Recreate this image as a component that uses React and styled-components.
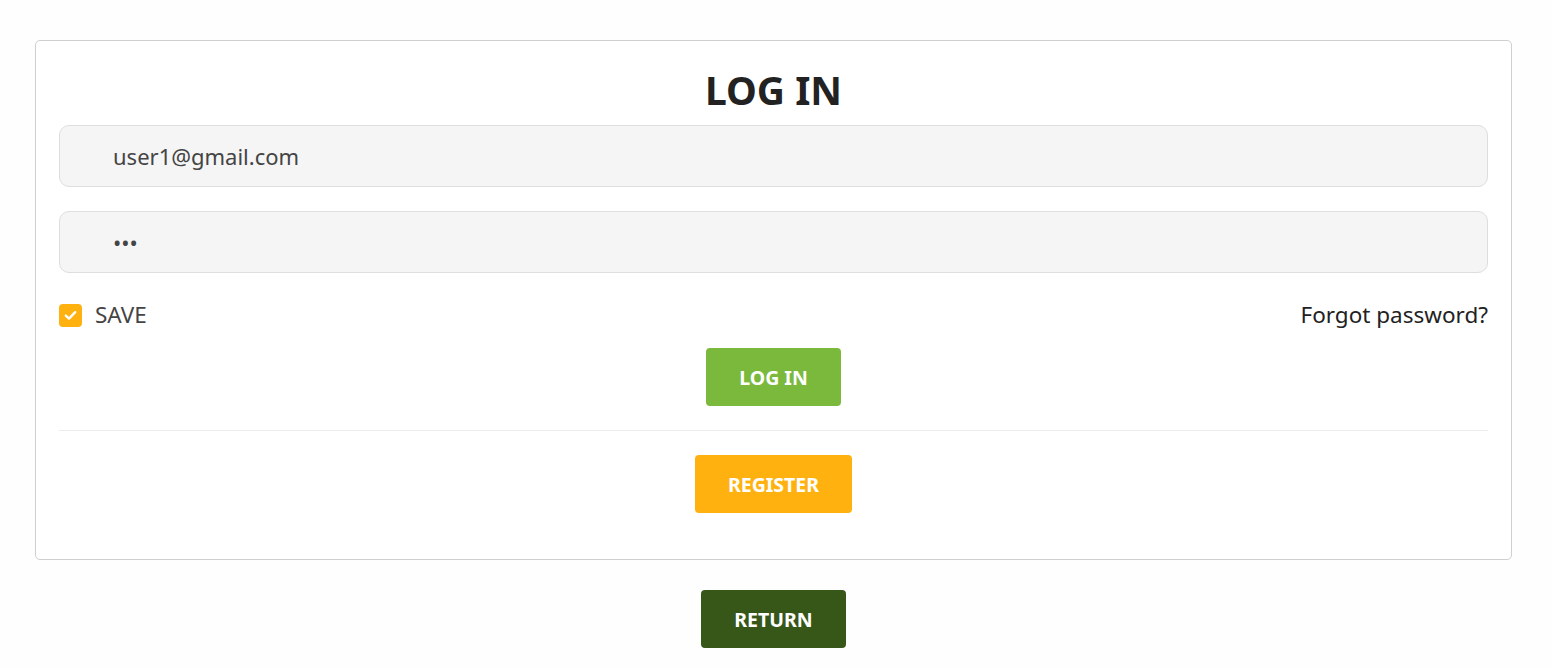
import React, { useState } from "react";
import styled, { createGlobalStyle } from "styled-components";

const GlobalStyle = createGlobalStyle`
  * { box-sizing: border-box; }
  body {
    margin: 0;
    background: #fefefe;
    font-family: "Noto Sans", "Open Sans", sans-serif;
    color: #222;
  }
`;

const Page = styled.div`
  padding: 40px 40px 20px 35px;
  display: flex;
  flex-flow: column;
  align-items: center;
`;

const Card = styled.form`
  width: 100%;
  border: 1px solid #cfcfcf;
  border-radius: 5px;
  background: #fff;
  padding: 22px 23px 46px;
  display: flex;
  flex-flow: column;
`;

const Title = styled.h1`
  margin: 0 0 8px;
  text-align: center;
  font-size: 39px;
  line-height: 54px;
  font-weight: bold;
  color: #222;
`;

const Input = styled.input`
  width: 100%;
  height: 62px;
  border: 1px solid #dedede;
  border-radius: 10px;
  background: #f5f5f5;
  padding: 0 0 0 53px;
  margin-bottom: ${props => (props.last ? "0" : "24px")};
  font-family: inherit;
  font-size: 22px;
  color: #444;
  outline: none;
`;

const OptionsRow = styled.div`
  display: flex;
  align-items: center;
  justify-content: space-between;
  margin-top: 29px;
  height: 26px;
  line-height: 26px;
`;

const CheckLabel = styled.label`
  display: flex;
  align-items: center;
  gap: 13px;
  font-size: 22.5px;
  color: #444;
  cursor: pointer;
`;

const CheckBox = styled.span`
  width: 23px;
  height: 23px;
  border-radius: 4px;
  background: ${props => (props.checked ? "#ffb20f" : "#fff")};
  border: ${props => (props.checked ? "none" : "1px solid #bbb")};
  display: flex;
  align-items: center;
  justify-content: center;
`;

const Forgot = styled.a`
  font-size: 22.5px;
  color: #222;
  text-decoration: none;
  cursor: pointer;
`;

const Button = styled.button`
  align-self: center;
  height: 58px;
  padding: 0 33px;
  border: none;
  border-radius: 4px;
  background: ${props => props.bg};
  color: #fff;
  font-family: inherit;
  font-size: 19.5px;
  font-weight: bold;
  text-transform: uppercase;
  cursor: pointer;
`;

const Divider = styled.hr`
  width: 100%;
  border: none;
  border-top: 1px solid #ececec;
  margin: 24px 0;
`;

const LoginWrap = styled.div`
  margin-top: 20px;
  display: flex;
  justify-content: center;
`;

const ReturnWrap = styled.div`
  margin-top: 30px;
`;

const App = () => {
  const [save, setSave] = useState(true);
  return (
    <Page>
      <GlobalStyle />
      <Card onSubmit={e => e.preventDefault()}>
        <Title>LOG IN</Title>
        <Input type="email" defaultValue="user1@gmail.com" />
        <Input type="password" defaultValue="123" last />
        <OptionsRow>
          <CheckLabel onClick={() => setSave(!save)}>
            <CheckBox checked={save}>
              {save && (
                <svg width="13" height="11" viewBox="0 0 13 11">
                  <path d="M1.8 5.6 L5 8.6 L11.2 2.2" fill="none" stroke="#fff" strokeWidth="2.4" strokeLinecap="round" strokeLinejoin="round" />
                </svg>
              )}
            </CheckBox>
            SAVE
          </CheckLabel>
          <Forgot>Forgot password?</Forgot>
        </OptionsRow>
        <LoginWrap>
          <Button bg="#7bb93d">Log in</Button>
        </LoginWrap>
        <Divider />
        <Button bg="#ffb20f" type="button">Register</Button>
      </Card>
      <ReturnWrap>
        <Button bg="#375719" type="button">Return</Button>
      </ReturnWrap>
    </Page>
  );
};

export default App;
